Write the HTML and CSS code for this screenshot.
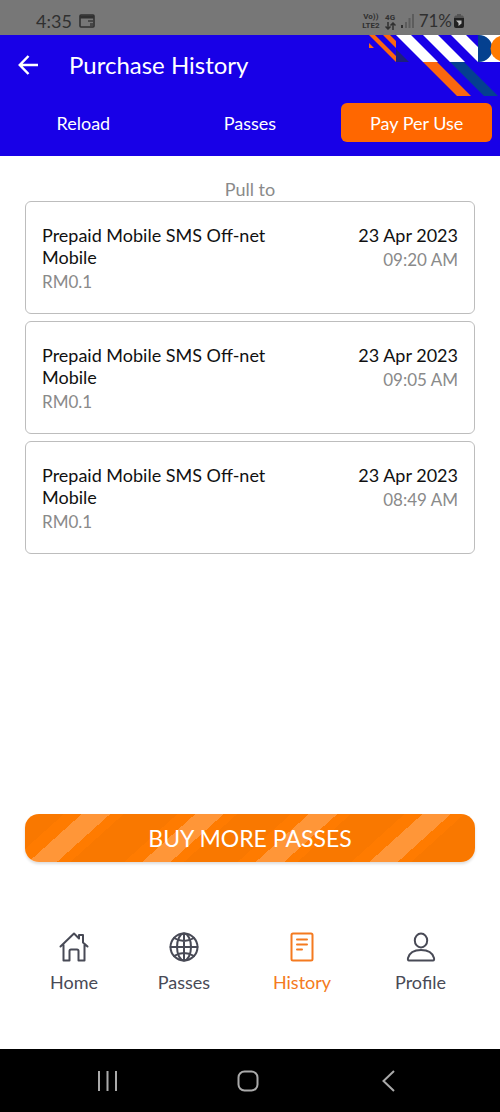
FILE: index.html
```html
<!DOCTYPE html>
<html lang="en">
<head>
<meta charset="utf-8">
<meta name="viewport" content="width=device-width, initial-scale=1">
<title>Purchase History</title>
<link rel="stylesheet" href="styles.css">
</head>
<body>
<div class="status">
  <div class="status-left">
    <span>4:35</span>
    <svg width="16" height="14" viewBox="0 0 16 14" fill="none" stroke="#303030" stroke-width="1.6"><rect x="1" y="1" width="14" height="12" rx="1"/><path d="M1 3h14" stroke-width="3"/><path d="M9 6h5v2H9zM11 9h3v3h-3z" fill="#484848" stroke="none"/></svg>
  </div>
  <div class="status-right">
    <span class="net">Vo))<br>LTE2</span>
    <span class="net">4G<br><svg width="11" height="8" viewBox="0 0 11 8" fill="none" stroke="#303030" stroke-width="1.5"><path d="M3 0v7M.5 4.500 3 7l2.500-2.500M8 8V1M5.500 3.500 8 1l2.500 2.500"/></svg></span>
    <svg width="13" height="14" viewBox="0 0 13 14"><path d="M0 11h2v3H0z" fill="#303030"/><path d="M4 8h2v6H4zM7.500 4h2v10h-2zM11 0h2v14h-2z" fill="#5c5c5c"/></svg>
    <span class="charge">71%<svg width="10" height="14" viewBox="0 0 10 14"><path d="M3 0h4v1.500h1.500Q10 2 10 4H0q0-2 1.500-2.500H3z" fill="#555"/><path d="M0 4h10v8q0 2-2 2H2q-2 0-2-2z" fill="#222"/><path d="M2 6.500h5.500v3L4.500 12V9z" fill="#bbb"/></svg></span>
  </div>
</div>
<header class="header">
  <svg class="art" width="132" height="62" viewBox="0 0 132 62">
    <path d="M1 8v5h5zM1 0h6l21 21v6zM15 0h7l6 6v7z" fill="#fb670f"/>
    <path d="M28 14v13h13z" fill="#1c1f7c"/>
    <path d="M28 0h15l27 27H55zM55 0h15l27 27H82zM83 0h15l12 12v15zM110 0h22v27h-22z" fill="#fff"/>
    <path d="M55 27h14l34 34H89z" fill="#fb670f"/>
    <path d="M82 27h14l34 34h-14zM110 0h1a13 13 0 0 1 0 27h-1z" fill="#04408f"/>
    <path d="M132 1a13 13 0 0 0 0 25z" fill="#ff7a00"/>
  </svg>
  <div class="title-row">
    <button class="back" aria-label="Back"><svg width="20" height="20" viewBox="0 0 20 20" fill="none" stroke="#fff" stroke-width="2.5"><path d="M20 10H2M10.500 1 1.800 10l8.700 9"/></svg></button>
    <h1>Purchase History</h1>
  </div>
  <nav class="tabs">
    <button class="tab">Reload</button>
    <button class="tab">Passes</button>
    <button class="tab active">Pay Per Use</button>
  </nav>
</header>
<main class="content">
  <p class="pull">Pull to</p>
  <ul class="list">
    <li class="card"><div class="what"><p>Prepaid Mobile SMS Off-net Mobile</p><p class="muted">RM0.1</p></div><div class="when"><p>23 Apr 2023</p><p class="muted">09:20 AM</p></div></li>
    <li class="card"><div class="what"><p>Prepaid Mobile SMS Off-net Mobile</p><p class="muted">RM0.1</p></div><div class="when"><p>23 Apr 2023</p><p class="muted">09:05 AM</p></div></li>
    <li class="card"><div class="what"><p>Prepaid Mobile SMS Off-net Mobile</p><p class="muted">RM0.1</p></div><div class="when"><p>23 Apr 2023</p><p class="muted">08:49 AM</p></div></li>
  </ul>
  <button class="buy">BUY MORE PASSES</button>
</main>
<nav class="bottom">
  <a href="#"><svg width="30" height="30" viewBox="0 0 30 30"><path d="M1.500 14.500 15 1.500l5 5V3h4v7.500l4.500 4M4.500 13v15.500h6V19q0-1.500 1.500-1.500h6q1.500 0 1.500 1.500v9.500h6V13"/></svg>Home</a>
  <a href="#"><svg width="30" height="30" viewBox="0 0 30 30"><circle cx="15" cy="15" r="13.500"/><ellipse cx="15" cy="15" rx="7" ry="13.500"/><path d="M15 1.500v27M1.500 15h27M5 6q10 6 20 0M5 24q10-6 20 0"/></svg>Passes</a>
  <a href="#" class="current"><svg width="30" height="30" viewBox="0 0 30 30"><rect x="4.500" y="1.500" width="21" height="27" rx="1.500"/><path d="M10 7.500h10M10 12.500h10M10 17.500h5"/></svg>History</a>
  <a href="#"><svg width="30" height="30" viewBox="0 0 30 30"><ellipse cx="15" cy="8.500" rx="6.200" ry="7"/><path d="M3 28.500Q1.500 28.500 2 26C3.500 20.500 9 18 15 18s11.500 2.500 13 8q.5 2.500-1 2.500z"/></svg>Profile</a>
</nav>
<div class="system">
  <button aria-label="Recent apps"><svg width="22" height="22" viewBox="0 0 22 22"><path d="M2 1v20M10.500 1v20M19 1v20"/></svg></button>
  <button aria-label="Home screen"><svg width="22" height="22" viewBox="0 0 22 22"><rect x="1.500" y="1.500" width="19" height="19" rx="6"/></svg></button>
  <button aria-label="Go back"><svg width="22" height="22" viewBox="0 0 22 22"><path d="M17 1 6.500 11 17 21"/></svg></button>
</div>
</body>
</html>
```
FILE: styles.css
```css
* { box-sizing: border-box; }
body { margin: 0; min-height: 100vh; display: flex; flex-direction: column; background: #fff; color: #111; font: 18px/22px Lato, sans-serif; }
h1, p, ul { margin: 0; padding: 0; font-weight: 400; }
button { margin: 0; padding: 0; border: 0; background: none; color: inherit; font: inherit; }
svg { display: block; }
.status { height: 35px; padding: 8px 36px 0; display: flex; justify-content: space-between; background: #777; color: #303030; }
.status-left, .status-right { height: 26px; display: flex; align-items: center; gap: 7px; }
.status-right { gap: 5px; }
.charge { display: flex; align-items: center; gap: 2px; font-size: 17px; }
.net { font: bold 8px/9px Roboto, sans-serif; text-align: center; }
.header { position: relative; background: #1800e7; color: #fff; }
.art { position: absolute; top: 0; right: 0; }
.title-row { height: 60px; padding-left: 18px; display: flex; align-items: center; gap: 31px; }
.title-row h1 { font-size: 24px; line-height: 28px; }
.tabs { position: relative; padding: 8px 0 14px; display: grid; grid-template-columns: repeat(3, 1fr); }
.tab { height: 39px; margin: 0 8px; border-radius: 6px; }
.tab.active { background: #ff6700; }
.content { flex: 1; padding: 22px 25px 42px; display: flex; flex-direction: column; }
.pull { text-align: center; color: #8a8a8a; }
.list { margin-top: 1px; list-style: none; display: flex; flex-direction: column; gap: 7px; }
.card { min-height: 113px; padding: 22px 16px 20px; border: 1px solid #bdbdbd; border-radius: 6px; display: flex; justify-content: space-between; gap: 24px; }
.what { max-width: 240px; }
.when { text-align: right; }
.muted { margin-top: 3px; color: #8a8a8a; font-size: 17px; }
.buy { height: 48px; margin-top: auto; border-radius: 14px; color: #fff; font-size: 23px; line-height: 28px; box-shadow: 0 2px 3px #ddd; background: repeating-linear-gradient(138deg, #f97800 0 26px, #ff7b00 26px 38px, #ff9638 38px 57px, #ff7b00 57px 66px, #f97800 66px 76px); }
.bottom { height: 145px; padding: 28px 52px 0; display: grid; grid-template-columns: minmax(0, 44fr) minmax(0, 54fr) minmax(0, 60fr) minmax(0, 55fr); column-gap: 61px; align-items: start; }
.bottom a { display: flex; flex-direction: column; align-items: center; gap: 9px; color: #484a56; text-decoration: none; }
.bottom .current { color: #f47a20; }
.bottom svg { fill: none; stroke: currentColor; stroke-width: 2; stroke-linecap: round; stroke-linejoin: round; }
.system { height: 63px; padding: 0 42px 0 38px; display: grid; grid-template-columns: repeat(3, 1fr); place-items: center; background: #000; }
.system svg { fill: none; stroke: #aaa; stroke-width: 2; }
```
